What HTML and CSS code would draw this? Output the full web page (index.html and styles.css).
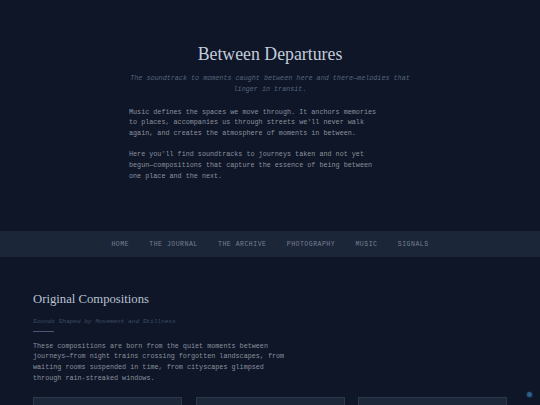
FILE: index.html
```html
<!DOCTYPE html>
<html lang="en">
<head>
<meta charset="utf-8">
<title>Between Departures</title>
<link rel="stylesheet" href="styles.css">
</head>
<body>
<header class="hero">
  <h1 class="hero-title">Between Departures</h1>
  <p class="hero-tagline">The soundtrack to moments caught between here and there—melodies that linger in transit.</p>
  <p class="hero-text">Music defines the spaces we move through. It anchors memories to places, accompanies us through streets we'll never walk again, and creates the atmosphere of moments in between.</p>
  <p class="hero-text">Here you'll find soundtracks to journeys taken and not yet begun—compositions that capture the essence of being between one place and the next.</p>
</header>
<nav class="nav">
  <a class="nav-link" href="#">Home</a>
  <a class="nav-link" href="#">The Journal</a>
  <a class="nav-link" href="#">The Archive</a>
  <a class="nav-link" href="#">Photography</a>
  <a class="nav-link" href="#">Music</a>
  <a class="nav-link" href="#">Signals</a>
</nav>
<main class="section">
  <h2 class="section-title">Original Compositions</h2>
  <p class="section-sub">Sounds Shaped by Movement and Stillness</p>
  <div class="section-rule"></div>
  <p class="section-text">These compositions are born from the quiet moments between journeys—from night trains crossing forgotten landscapes, from waiting rooms suspended in time, from cityscapes glimpsed through rain-streaked windows.</p>
  <div class="cards">
    <div class="card"></div>
    <div class="card"></div>
    <div class="card"></div>
  </div>
</main>
<div class="dot"></div>
</body>
</html>
```

FILE: styles.css
```css
html, body {
  margin: 0;
  padding: 0;
  background: #0e1628;
  height: 100%;
  overflow: hidden;
}
body {
  font-family: "Liberation Mono", monospace;
  color: #8c919c;
}
.hero {
  width: 282px;
  margin: 0 auto;
  padding-top: 43px;
  height: 188px;
}
.hero-title {
  font-family: "Liberation Serif", serif;
  font-weight: normal;
  font-size: 17.8px;
  line-height: 22px;
  color: #c3ccda;
  text-align: center;
  margin: 0 0 7.5px 0;
}
.hero-tagline {
  font-style: italic;
  font-size: 6.75px;
  line-height: 11.3px;
  color: #56647c;
  text-align: center;
  margin: 0 0 11.5px 0;
}
.hero-text {
  font-size: 6.75px;
  line-height: 10.8px;
  max-width: 63ch;
  margin: 0 0 10.3px 0;
  color: #8c919c;
}
.nav {
  display: flex;
  justify-content: center;
  align-items: center;
  gap: 20.3px;
  height: 26px;
  background: #1c2639;
}
.nav-link {
  font-size: 6.5px;
  letter-spacing: 0.5px;
  text-transform: uppercase;
  color: #768092;
  text-decoration: none;
}
.section {
  padding: 35px 33px 0 33px;
}
.section-title {
  font-family: "Liberation Serif", serif;
  font-weight: normal;
  font-size: 12.7px;
  line-height: 15px;
  color: #b9c2d0;
  margin: 0 0 10px 0;
}
.section-sub {
  font-style: italic;
  font-size: 6.1px;
  line-height: 10px;
  color: #3e4c64;
  margin: 0;
}
.section-rule {
  width: 21px;
  height: 1px;
  background: #4a5872;
  margin: 3.5px 0 9px 0;
}
.section-text {
  font-size: 6.75px;
  line-height: 10.9px;
  max-width: 63ch;
  margin: 0 0 13px 0;
  color: #8c919c;
}
.cards {
  display: grid;
  grid-template-columns: repeat(3, 1fr);
  gap: 13.5px;
}
.card {
  height: 40px;
  background: #1c2739;
  border: 1px solid #2c384c;
}
.dot {
  position: fixed;
  right: 8.5px;
  bottom: 8.5px;
  width: 5px;
  height: 5px;
  border-radius: 50%;
  background: #2b5f86;
  box-shadow: 0 0 3px #1f4a6e;
}
```
